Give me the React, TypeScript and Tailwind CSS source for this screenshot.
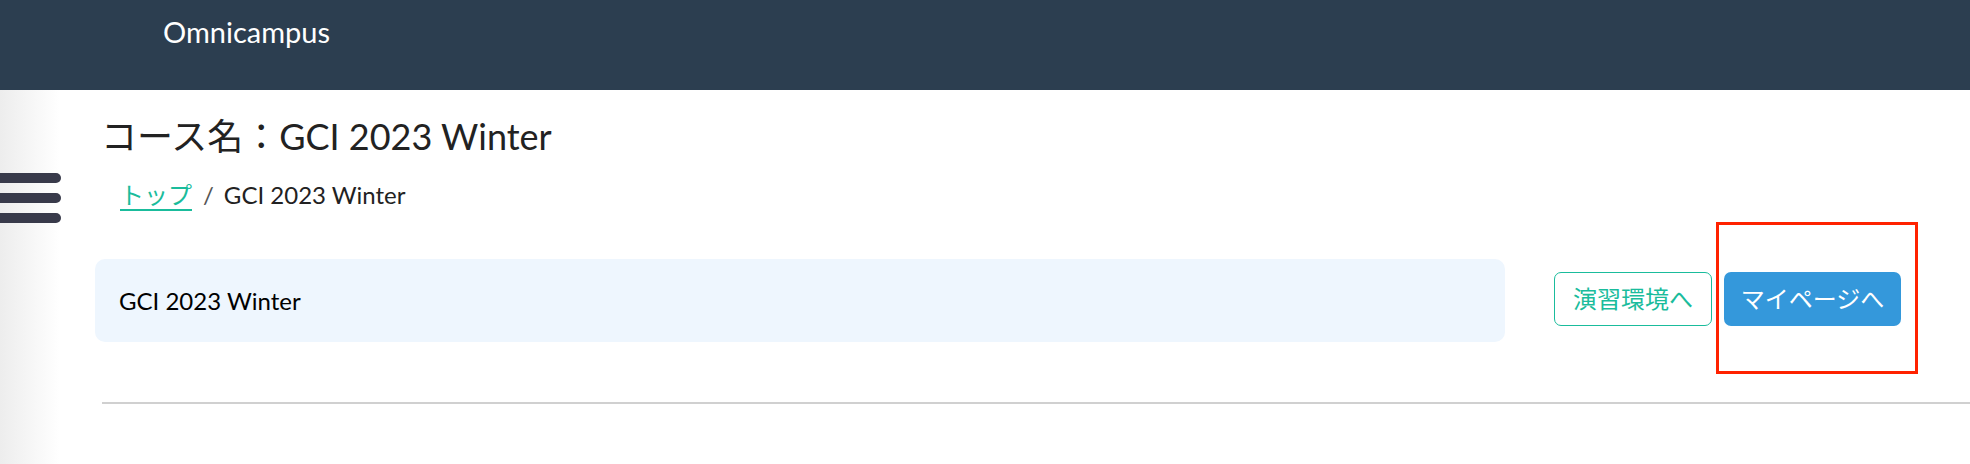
import React from "react";

const font = "font-['Lato','Noto_Sans_CJK_JP',sans-serif]";

function Hamburger() {
  return (
    <div className="flex flex-col gap-[10px]">
      <span className="block w-[61px] h-[10px] rounded-r-full bg-[#383a4a]" />
      <span className="block w-[61px] h-[10px] rounded-r-full bg-[#383a4a]" />
      <span className="block w-[61px] h-[10px] rounded-r-full bg-[#383a4a]" />
    </div>
  );
}

export default function App() {
  return (
    <div className={`min-h-[464px] w-full bg-white ${font}`}>
      {/* Header */}
      <header className="h-[90px] bg-[#2c3e50] pl-[163px] pt-[14px]">
        <span className="text-[29px] leading-[35px] text-white">Omnicampus</span>
      </header>

      <div className="flex min-h-[374px]">
        {/* Sidebar */}
        <aside className="w-[95px] shrink-0 bg-[linear-gradient(to_right,#ededed,#ffffff_60px)] pt-[83px]">
          <Hamburger />
        </aside>

        {/* Main */}
        <main className="flex-1 pt-[24px]">
          <h1 className="pl-[6px] text-[36px] leading-[44px] text-[#222]">コース名：GCI 2023 Winter</h1>

          <nav className="mt-[22px] pl-[25px] flex items-center text-[24px] leading-[30px] text-[#222]">
            <a href="#" className="text-[#1abc9c] underline underline-offset-[5px]">トップ</a>
            <span className="ml-[11px] mr-[10px] text-[#555]">/</span>
            <span>GCI 2023 Winter</span>
          </nav>

          <div className="mt-[49px] flex items-center pr-[69px]">
            <div className="flex-1 h-[83px] rounded-[10px] bg-[#eef6fe] px-[24px] flex items-center text-[24px] text-black">
              GCI 2023 Winter
            </div>
            <div className="ml-[49px] mb-[4px] flex items-center gap-[12px]">
              <button className="h-[54px] w-[158px] rounded-[7px] border border-[#1abc9c] text-[24px] text-[#1abc9c] bg-white">
                演習環境へ
              </button>
              <div className="relative">
                <button className="h-[54px] w-[177px] rounded-[7px] bg-[#3498db] text-[24px] text-white">
                  マイページへ
                </button>
                <span className="pointer-events-none absolute -left-[8px] -right-[17px] -top-[50px] -bottom-[48px] border-[3px] border-[#ff2200]" />
              </div>
            </div>
          </div>

          <div className="mt-[60px] ml-[7px] h-[2px] bg-[#d0d0d0]" />
        </main>
      </div>
    </div>
  );
}
